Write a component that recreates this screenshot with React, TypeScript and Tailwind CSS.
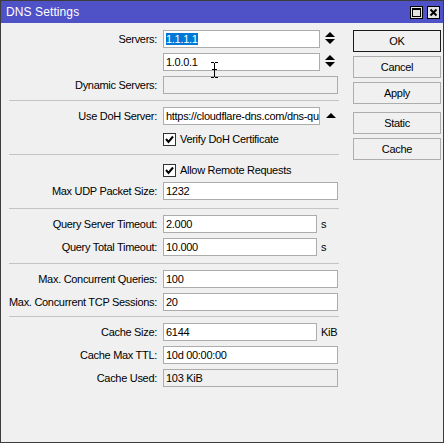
import React from 'react';

const Label: React.FC<{ text?: string }> = ({ text }) => (
  <div className="w-[156px] shrink-0 text-right whitespace-nowrap">{text}</div>
);

const Field: React.FC<{ w: string; disabled?: boolean; children?: React.ReactNode }> = ({ w, disabled, children }) => (
  <div
    className={`${w} ml-[6px] h-[18px] border border-[#acacac] px-[2px] leading-[16px] overflow-hidden whitespace-nowrap ${
      disabled ? 'bg-[#f0f0f0]' : 'bg-white'
    }`}
  >
    {children}
  </div>
);

const Spinner = () => (
  <svg width="10" height="12" viewBox="0 0 10 12" className="ml-[5px] mt-[-2px]">
    <polygon points="0,5 5,0 10,5" fill="#000" />
    <polygon points="0,7 10,7 5,12" fill="#000" />
  </svg>
);

const Check = () => (
  <div className="w-[13px] h-[13px] ml-[6px] border border-[#333] bg-white flex items-center justify-center">
    <svg width="9" height="9" viewBox="0 0 9 9">
      <polyline points="1,4 3.5,7 8,1.5" fill="none" stroke="#000" strokeWidth="2" />
    </svg>
  </div>
);

const Sep: React.FC<{ mt: string }> = ({ mt }) => <div className={`${mt} ml-[8px] w-[330px] h-px bg-[#c4c4c4]`} />;

const Btn: React.FC<{ text: string; def?: boolean; mt: string }> = ({ text, def, mt }) => (
  <div
    className={`${mt} h-[22px] w-[88px] flex items-center justify-center border bg-[#f0f0f0] ${
      def ? 'border-[#1a1a1a]' : 'border-[#adadad]'
    }`}
  >
    {text}
  </div>
);

export default function App() {
  return (
    <div className="w-[446px] h-[445px] bg-white font-['Liberation_Sans',Arial,sans-serif] text-[11px] tracking-[-0.3px] text-black">
      <div className="relative w-[444px] h-[443px] border border-[#3c3c3c] bg-[#f0f0f0] flex flex-col">
        {/* title bar */}
        <div className="h-[22px] bg-[#4f51c7] flex items-center pl-[5px] pr-[3px]">
          <span className="text-white text-[12px] tracking-[0.1px]">DNS Settings</span>
          <div className="ml-auto flex gap-[4px]">
            <div className="w-[13px] h-[13px] border border-black bg-[#e3e3e3] flex items-center justify-center">
              <div className="w-[9px] h-[9px] border border-black border-t-2" />
            </div>
            <div className="w-[13px] h-[13px] border border-black bg-[#e3e3e3] flex items-center justify-center">
              <svg width="9" height="9" viewBox="0 0 9 9">
                <path d="M1.5 1.5 L7.5 7.5 M7.5 1.5 L1.5 7.5" stroke="#000" strokeWidth="2" />
              </svg>
            </div>
          </div>
        </div>

        <div className="flex flex-1">
          {/* form */}
          <div className="w-[352px] pt-[7px] flex flex-col">
            <div className="flex items-center h-[18px]">
              <Label text="Servers:" />
              <Field w="w-[157px]">
                <span className="bg-[#0078d7] text-white">1.1.1.1</span>
              </Field>
              <Spinner />
            </div>
            <div className="mt-[5px] flex items-center h-[18px]">
              <Label />
              <Field w="w-[157px]">1.0.0.1</Field>
              <Spinner />
            </div>
            <div className="mt-[5px] flex items-center h-[18px]">
              <Label text="Dynamic Servers:" />
              <Field w="w-[175px]" disabled />
            </div>

            <Sep mt="mt-[6px]" />
            <div className="mt-[6px] flex items-center h-[18px]">
              <Label text="Use DoH Server:" />
              <Field w="w-[157px]">https://cloudflare-dns.com/dns-query</Field>
              <svg width="10" height="5" viewBox="0 0 10 5" className="ml-[6px] mt-[-2px]">
                <polygon points="0,5 5,0 10,5" fill="#000" />
              </svg>
            </div>
            <div className="mt-[5px] flex items-center h-[18px]">
              <Label />
              <Check />
              <span className="ml-[4px]">Verify DoH Certificate</span>
            </div>

            <Sep mt="mt-[6px]" />
            <div className="mt-[6px] flex items-center h-[18px]">
              <Label />
              <Check />
              <span className="ml-[4px]">Allow Remote Requests</span>
            </div>
            <div className="mt-[3px] flex items-center h-[18px]">
              <Label text="Max UDP Packet Size:" />
              <Field w="w-[175px]">1232</Field>
            </div>

            <Sep mt="mt-[8px]" />
            <div className="mt-[6px] flex items-center h-[18px]">
              <Label text="Query Server Timeout:" />
              <Field w="w-[154px]">2.000</Field>
              <span className="ml-[4px]">s</span>
            </div>
            <div className="mt-[5px] flex items-center h-[18px]">
              <Label text="Query Total Timeout:" />
              <Field w="w-[154px]">10.000</Field>
              <span className="ml-[4px]">s</span>
            </div>

            <Sep mt="mt-[7px]" />
            <div className="mt-[6px] flex items-center h-[18px]">
              <Label text="Max. Concurrent Queries:" />
              <Field w="w-[175px]">100</Field>
            </div>
            <div className="mt-[5px] flex items-center h-[18px]">
              <Label text="Max. Concurrent TCP Sessions:" />
              <Field w="w-[175px]">20</Field>
            </div>

            <Sep mt="mt-[5px]" />
            <div className="mt-[6px] flex items-center h-[18px]">
              <Label text="Cache Size:" />
              <Field w="w-[154px]">6144</Field>
              <span className="ml-[4px]">KiB</span>
            </div>
            <div className="mt-[5px] flex items-center h-[18px]">
              <Label text="Cache Max TTL:" />
              <Field w="w-[175px]">10d 00:00:00</Field>
            </div>
            <div className="mt-[5px] flex items-center h-[18px]">
              <Label text="Cache Used:" />
              <Field w="w-[175px]" disabled>103 KiB</Field>
            </div>
          </div>

          {/* buttons */}
          <div className="pt-[7px] flex flex-col">
            <Btn text="OK" def mt="mt-0" />
            <Btn text="Cancel" mt="mt-[4px]" />
            <Btn text="Apply" mt="mt-[4px]" />
            <Btn text="Static" mt="mt-[8px]" />
            <Btn text="Cache" mt="mt-[4px]" />
          </div>
        </div>

        {/* mouse cursor */}
        <svg width="7" height="16" viewBox="0 0 7 16" className="absolute left-[210px] top-[61px]">
          <path d="M0 0.5 H3 M4 0.5 H7 M3.5 1 V15 M0 15.5 H3 M4 15.5 H7 M1 7.5 H6" stroke="#000" strokeWidth="1" fill="none" />
        </svg>
      </div>
    </div>
  );
}
